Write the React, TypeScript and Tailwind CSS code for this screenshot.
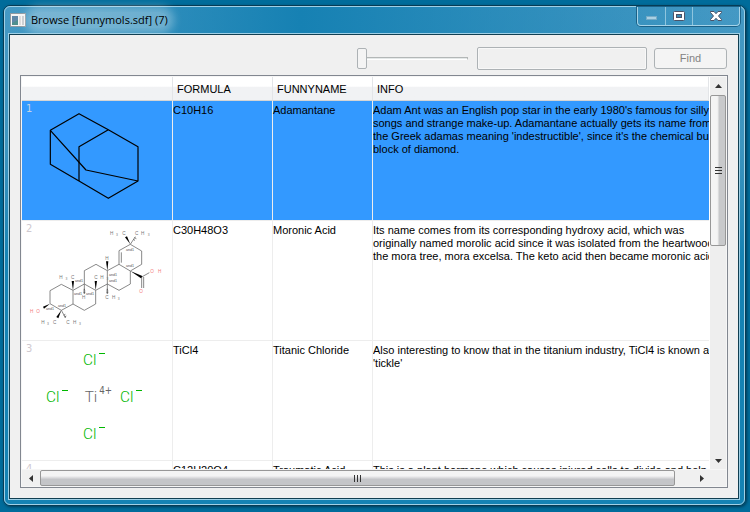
import type { ReactNode } from "react";

type Molecule = {
  formula: string;
  name: string;
  info: string[];
  drawing: ReactNode;
};

function Adamantane() {
  return (
    <svg viewBox="6 18 450 357" className="block h-[119px] w-[150px]" fill="none" stroke="#000" strokeWidth="3.6" strokeLinejoin="round" role="img" aria-label="Adamantane structure">
      <path d="M177 56L91 106V208L177 258L265 310L354 258V155L265 104Z" />
      <path d="M265 104L177 155V258" />
      <path d="M91 106L198 225L354 258" />
    </svg>
  );
}

const atoms: [string, number, number][] = [
  ["H", 275, 45], ["C", 312, 45], ["C", 350, 45], ["H", 368, 45],
  ["H", 261, 120],
  ["H", 123, 177], ["C", 158, 177], ["C", 228, 177], ["H", 246, 177],
  ["H", 191, 237], ["C", 261, 237], ["H", 281, 237],
  ["H", 69, 312], ["C", 104, 312], ["C", 144, 312], ["H", 164, 312],
];
const subscripts: [number, number][] = [[291, 48], [386, 48], [139, 180], [262, 180], [296, 240], [84, 315], [180, 315]];
const stereo: [number, number][] = [[330, 93], [330, 140], [279, 167], [279, 186], [177, 186], [174, 224], [210, 224], [90, 270], [126, 261]];

function MoronicAcid() {
  return (
    <svg viewBox="6 3 450 357" className="block h-[119px] w-[150px] font-['Liberation_Sans',sans-serif]" role="img" aria-label="Moronic acid structure">
      <g fill="none" stroke="#6b6b6b" strokeWidth="2.4">
        <path d="M124 193L159 211V252L124 271L90 251V212Z" />
        <path d="M159 211L193 192L227 211V252L193 271L159 252" />
        <path d="M193 192V152L228 133L262 152V192L227 211" />
        <path d="M262 152L297 133L331 153V192L297 211L262 192" />
        <path d="M297 133V92L331 73L365 93V133L331 153" />
        <path d="M304 128V97M365 171V204M371 171V204M365 171L388 158" />
        <path d="M331 73L346 50M262 192V222M193 192V222M124 271L137 294" />
      </g>
      <g fill="#000">
        <path d="M331 73L315 52L321 49Z" />
        <path d="M331 153L363 175L367 168Z" />
        <path d="M262 152L258 124H265Z" />
        <path d="M159 211L155 183H162Z" />
        <path d="M227 211L224 183H231Z" />
        <path d="M90 251L69 260L72 266Z" />
        <path d="M124 271L109 291L115 295Z" />
      </g>
      <path d="M344 53L349 56M341 59L345 61M190 218H196M190 213H196M191 208H195M259 218H265M259 213H265M260 208H264M133 291L139 288M131 286L136 283" stroke="#333" strokeWidth="2" />
      <g fill="#777" fontSize="14" textAnchor="middle">
        {atoms.map(([s, x, y]) => <text key={`${x}-${y}`} x={x} y={y}>{s}</text>)}
      </g>
      <g fill="#777" fontSize="10" textAnchor="middle">
        {subscripts.map(([x, y]) => <text key={`${x}-${y}`} x={x} y={y}>3</text>)}
      </g>
      <g fill="#555" fontSize="11" textAnchor="middle">
        {stereo.map(([x, y]) => <text key={`${x}-${y}`} x={x} y={y}>and1</text>)}
      </g>
      <g fill="#f47c7c" fontSize="14" textAnchor="middle">
        <text x="35" y="279">H</text>
        <text x="54" y="279">O</text>
        <text x="396" y="159">O</text>
        <text x="419" y="159">H</text>
        <text x="363" y="219">O</text>
      </g>
    </svg>
  );
}

function TitanicChloride() {
  const chlorides = [[191, 90], [80, 201], [302, 201], [191, 312]];
  return (
    <svg viewBox="6 18 450 357" className="block h-[119px] w-[150px] font-['DejaVu_Sans_Condensed','DejaVu_Sans',sans-serif]" role="img" aria-label="Titanium chloride ions">
      {chlorides.map(([x, y]) => (
        <g key={`${x}-${y}`} fill="#00b800">
          <text x={x - 2} y={y} fontSize="46" className="font-['Roboto',sans-serif] font-light">Cl</text>
          <path d={`M${x + 46} ${y - 36}h18v3h-18z`} />
        </g>
      ))}
      <g fill="#666">
        <text x="194" y="201" fontSize="46" className="font-['Roboto',sans-serif] font-light">Ti</text>
        <text x="238" y="177" fontSize="29">4+</text>
      </g>
    </svg>
  );
}

const molecules: Molecule[] = [
  {
    formula: "C10H16",
    name: "Adamantane",
    info: [
      "Adam Ant was an English pop star in the early 1980's famous for silly",
      "songs and strange make-up. Adamantane actually gets its name from",
      "the Greek adamas meaning 'indestructible', since it's the chemical building",
      "block of diamond.",
    ],
    drawing: <Adamantane />,
  },
  {
    formula: "C30H48O3",
    name: "Moronic Acid",
    info: [
      "Its name comes from its corresponding hydroxy acid, which was",
      "originally named morolic acid since it was isolated from the heartwood of",
      "the mora tree, mora excelsa. The keto acid then became moronic acid.",
    ],
    drawing: <MoronicAcid />,
  },
  {
    formula: "TiCl4",
    name: "Titanic Chloride",
    info: ["Also interesting to know that in the titanium industry, TiCl4 is known as", "'tickle'"],
    drawing: <TitanicChloride />,
  },
  {
    formula: "C12H20O4",
    name: "Traumatic Acid",
    info: ["This is a plant hormone which causes injured cells to divide and help"],
    drawing: null,
  },
];

function TitleBar() {
  const button = "flex h-full items-center justify-center";
  return (
    <header className="flex h-[26px] shrink-0 items-start justify-between bg-linear-to-r from-[#1681b3]/0 via-[#1681b3] via-40% to-[#1681b3]/0 pl-[2px]">
      <div className="flex h-[26px] items-center gap-[5px]">
        <svg width="16" height="14" viewBox="0 0 16 14" aria-hidden="true">
          <rect x=".5" y=".5" width="15" height="13" fill="#f5f5f5" stroke="#8e9aa2" />
          <rect x="2" y="3" width="6" height="9" fill="#4f8f8e" />
          <path d="M2 3h6v4L2 10z" fill="#5f88a8" />
          <rect x="9" y="3" width="2" height="9" fill="#dcdcdc" />
          <rect x="12" y="3" width="2" height="9" fill="#c9cdd0" />
        </svg>
        <h1 className="rounded-full bg-white/30 font-['Open_Sans','Noto_Sans',sans-serif] text-[11px] leading-4 text-black shadow-[0_0_8px_6px_rgba(255,255,255,0.3)]">
          Browse [funnymols.sdf] (7)
        </h1>
      </div>
      <div className="flex h-[19px] rounded-b-[4px] border border-t-0 border-[#a5d3e8] shadow-[0_0_0_1px_#1b6187]">
        <button aria-label="Minimize" className={`${button} w-7 border-r border-[#8ec5de]`}>
          <svg width="11" height="4" className="mt-[3px]"><rect x=".5" y=".5" width="10" height="3" fill="#a9d0e3" stroke="#74abc7" /></svg>
        </button>
        <button aria-label="Maximize" className={`${button} w-[27px] border-r border-[#8ec5de]`}>
          <svg width="12" height="10"><rect x=".5" y=".5" width="11" height="9" rx="1" fill="#fff" stroke="#4a5368" /><rect x="3.5" y="3.5" width="5" height="3" fill="#3a8ab4" stroke="#4a5368" /></svg>
        </button>
        <button aria-label="Close" className={`${button} w-[46px]`}>
          <svg width="12" height="10" viewBox="0 0 12 10"><path d="M.5 .5h3.5L6 2.7 8 .5h3.500v1L8.500 5l3 3.500v1H8L6 7.300 4 9.500H.5v-1L3.500 5l-3-3.500z" fill="#fff" stroke="#4a5368" /></svg>
        </button>
      </div>
    </header>
  );
}

function Toolbar() {
  return (
    <div className="flex shrink-0 items-center justify-end pr-px">
      <input
        type="range"
        aria-label="Search position"
        defaultValue={0}
        disabled
        className="mr-[9px] h-[22px] w-[111px] appearance-none bg-transparent [&::-webkit-slider-runnable-track]:h-[3px] [&::-webkit-slider-runnable-track]:border [&::-webkit-slider-runnable-track]:border-l-0 [&::-webkit-slider-runnable-track]:border-[#b3b7b7] [&::-webkit-slider-runnable-track]:border-b-white [&::-webkit-slider-runnable-track]:bg-[#e4e8e8] [&::-webkit-slider-thumb]:-mt-[10px] [&::-webkit-slider-thumb]:h-[21px] [&::-webkit-slider-thumb]:w-[10px] [&::-webkit-slider-thumb]:appearance-none [&::-webkit-slider-thumb]:rounded-[2px] [&::-webkit-slider-thumb]:border [&::-webkit-slider-thumb]:border-[#adb2b5] [&::-webkit-slider-thumb]:bg-[#f4f4f4]"
      />
      <input type="text" aria-label="Search text" disabled className="mr-[7px] h-[23px] w-[170px] rounded-[2px] border border-[#adb2b5] bg-[#f0f0f0] px-1 shadow-[inset_0_0_0_1px_#f8f8f8]" />
      <button disabled className="h-[21px] w-[73px] rounded-[3px] border border-[#adb2b5] bg-[#f4f4f4] leading-[19px] text-[#838383]">
        Find
      </button>
    </div>
  );
}

function MoleculeTable() {
  const th = "h-[24px] border-b border-r border-b-[#d5d5d5] border-r-[#e3e5e8] bg-linear-to-b from-white from-40% to-[#f1f2f4] to-45% p-0 pl-[4px] pt-px text-left font-normal";
  return (
    <table className="w-full table-fixed border-separate border-spacing-0">
      <colgroup>
        <col className="w-[151px]" />
        <col className="w-[100px]" />
        <col className="w-[100px]" />
        <col />
      </colgroup>
      <thead>
        <tr>
          <th className={th} aria-label="Structure" />
          <th className={th}>FORMULA</th>
          <th className={th}>FUNNYNAME</th>
          <th className={th}>INFO</th>
        </tr>
      </thead>
      <tbody>
        {molecules.map((m, i) => {
          const td = `border-b border-r border-[#ededed] p-0 align-top ${i === 0 ? "bg-[#3399ff]" : "bg-white"}`;
          return (
            <tr key={m.formula} aria-selected={i === 0}>
              <td className={`${td} relative h-[120px]`}>
                <span className={`absolute left-[4px] top-px font-['DejaVu_Sans_Condensed','DejaVu_Sans',sans-serif] ${i === 0 ? "text-[#c3d3e4]" : "text-[#cfc9cf]"}`}>{i + 1}</span>
                {m.drawing}
              </td>
              <td className={`${td} pt-[3px]`}>{m.formula}</td>
              <td className={`${td} pt-[3px]`}>{m.name}</td>
              <td className={`${td} overflow-hidden whitespace-nowrap border-r-0 pt-[3px]`}>
                {m.info.map((line) => <div key={line}>{line}</div>)}
              </td>
            </tr>
          );
        })}
      </tbody>
    </table>
  );
}

function Arrow({ d, label }: { d: string; label: string }) {
  return (
    <button aria-label={label} className="flex size-[18px] max-h-full max-w-full shrink-0 items-center justify-center">
      <svg width="7" height="7" fill="#333"><path d={d} /></svg>
    </button>
  );
}

export default function App() {
  return (
    <div className="h-screen bg-[#006c9b] pb-[6px] pl-[3px] pr-[4px] pt-[5px] font-['Liberation_Sans',sans-serif] text-[11px] leading-[13px] text-black">
      <main className="flex h-full flex-col rounded-[7px] border border-[#073c55] bg-linear-to-b from-[#4599c4] from-0% via-[#3c95bf] via-28% to-[#1583b4] to-50% shadow-[1px_1px_3px_#003b57]">
        <div className="flex min-h-0 flex-1 flex-col rounded-[6px] border border-[#9fd0e6] pb-[4px] pl-[3px] pr-[4px]">
          <TitleBar />
          <section className="flex min-h-0 flex-1 flex-col border border-[#9fd0e6]">
            <div className="flex min-h-0 flex-1 flex-col gap-[5px] border border-[#123f52] bg-[#f0f0f0] px-[10px] pb-[10px] pt-[12px]">
              <Toolbar />
              <div className="flex min-h-0 flex-1 flex-col gap-px border border-[#828790] bg-[#f6f6f6] p-px">
                <div className="flex min-h-0 flex-1">
                  <div className="min-w-0 flex-1 overflow-hidden bg-white">
                    <MoleculeTable />
                  </div>
                  <div className="flex w-[17px] shrink-0 flex-col border-l border-white bg-[#eeeeee]">
                    <Arrow label="Scroll up" d="M0 5L3.500 1L7 5Z" />
                    <div className="flex h-[151px] flex-col items-center justify-center gap-[2px] rounded-[2px] border border-[#979797] bg-linear-to-r from-[#f4f4f4] from-45% to-[#c8c9cb] to-60%">
                      {[0, 1, 2].map((k) => <span key={k} className="h-px w-[7px] bg-[#333]" />)}
                    </div>
                    <div className="flex-1" />
                    <Arrow label="Scroll down" d="M0 2L3.500 6L7 2Z" />
                  </div>
                </div>
                <div className="flex h-4 shrink-0 bg-[#f0f0f0] pr-[16px]">
                  <Arrow label="Scroll left" d="M5 0L1 3.500L5 7Z" />
                  <div className="mr-[17px] flex flex-1 items-center justify-center gap-[2px] rounded-[2px] border border-[#979797] bg-linear-to-b from-[#f4f4f4] from-35% to-[#c4c5c8] to-60%">
                    {[0, 1, 2].map((k) => <span key={k} className="h-[7px] w-px bg-[#333]" />)}
                  </div>
                  <Arrow label="Scroll right" d="M2 0L6 3.500L2 7Z" />
                </div>
              </div>
            </div>
          </section>
        </div>
      </main>
    </div>
  );
}
